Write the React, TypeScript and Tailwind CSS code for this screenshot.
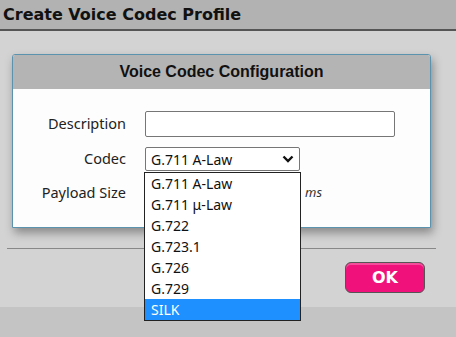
import React from "react";

const options = ["G.711 A-Law", "G.711 μ-Law", "G.722", "G.723.1", "G.726", "G.729", "SILK"];

export default function App() {
  return (
    <div className="relative w-[456px] h-[337px] overflow-hidden bg-[#d3d3d3] flex flex-col" style={{ fontFamily: "'Noto Sans', sans-serif" }}>
      <div className="h-[31px] shrink-0 bg-[#b2b2b2] border-b-2 border-[#555555] px-[3px] flex items-center">
        <span className="text-[16px] font-bold text-[#111] leading-none" style={{ fontFamily: "'DejaVu Sans', sans-serif" }}>
          Create Voice Codec Profile
        </span>
      </div>

      <div className="flex-1 flex flex-col">
        <div className="mt-[23px] ml-[12px] w-[419px] h-[174px] border border-[#5b92ae] rounded-t-[3px] bg-[#fdfdfd] shadow-[2px_5px_10px_rgba(0,0,0,0.35)] flex flex-col">
          <div className="h-[34px] bg-[#b4b4b4] flex items-center justify-center rounded-t-[2px]">
            <span className="text-[16px] font-bold text-[#111]" style={{ fontFamily: "'Liberation Sans', Arial, sans-serif" }}>
              Voice Codec Configuration
            </span>
          </div>
          <div className="flex flex-col pt-[22px] gap-[10px] text-[14.5px] text-[#222]">
            <div className="flex items-center h-[26px]">
              <span className="w-[113px] text-right">Description</span>
              <div className="ml-[19px] w-[250px] h-[26px] border border-[#767676] rounded-[2px] bg-white" />
            </div>
            <div className="flex items-center h-[24px]">
              <span className="w-[113px] text-right">Codec</span>
              <div className="ml-[19px] w-[155px] h-[24px] border border-[#767676] rounded-[2px] bg-white flex items-center justify-between pl-[5px] pr-[5px]">
                <span className="text-[#111] text-[14px]">G.711 A-Law</span>
                <svg width="12" height="8" viewBox="0 0 12 8">
                  <path d="M1.5 1.5 L6 6 L10.5 1.5" fill="none" stroke="#111" strokeWidth="2.4" />
                </svg>
              </div>
            </div>
            <div className="flex items-center h-[23px]">
              <span className="w-[113px] text-right">Payload Size</span>
              <div className="ml-[19px] w-[155px] h-[23px] border border-[#767676] rounded-[2px] bg-white" />
              <span className="ml-[5px] italic text-[13px] text-[#333]">ms</span>
            </div>
          </div>
        </div>

        <div className="mt-[20px] mx-[7px] w-[429px] h-px bg-[#888888]" />

        <div className="flex justify-end pr-[31px] mt-[13px]">
          <button className="w-[80px] h-[31px] rounded-[6px] border border-[#555] bg-[#f0127a] text-white font-bold text-[16px] shadow-[inset_0_2px_0_rgba(255,255,255,0.25)]" style={{ fontFamily: "'DejaVu Sans', sans-serif" }}>
            OK
          </button>
        </div>
      </div>

      <div className="h-[30px] shrink-0 bg-[#c4c4c4]" />

      <div className="absolute left-[144px] top-[172px] w-[157px] border border-[#222] bg-white flex flex-col text-[14px] text-[#111]">
        {options.map((o) => (
          <div key={o} className={"h-[21px] leading-[21px] pl-[6px] " + (o === "SILK" ? "bg-[#1e90ff] text-white" : "")}>
            {o}
          </div>
        ))}
      </div>
    </div>
  );
}
